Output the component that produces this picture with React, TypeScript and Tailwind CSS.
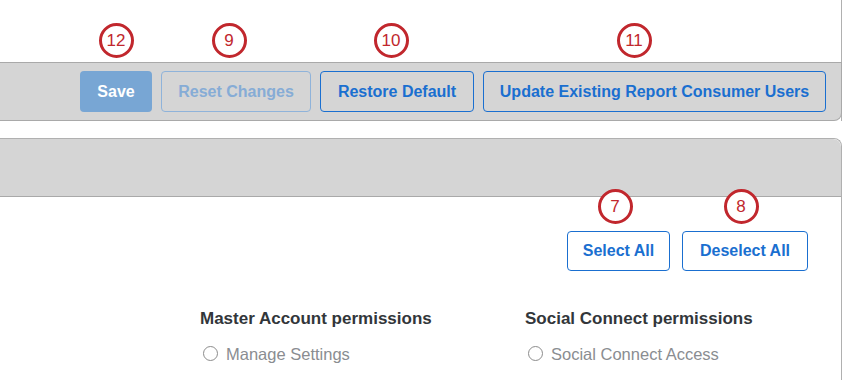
import React from "react";

// Numbered callouts drawn over the screenshot
const callouts = [
  { n: "12", x: 116, y: 40 },
  { n: "9", x: 229, y: 40 },
  { n: "10", x: 391, y: 40 },
  { n: "11", x: 634, y: 40 },
  { n: "7", x: 615, y: 206 },
  { n: "8", x: 741, y: 206 },
];

function Callout({ n, x, y }: { n: string; x: number; y: number }) {
  return (
    <div
      className="absolute w-[35px] h-[35px] rounded-full border-[3px] border-[#c1272d] bg-white flex items-center justify-center text-[#c1272d] text-[17px] leading-none"
      style={{ left: x - 17.5, top: y - 17.5 }}
    >
      {n}
    </div>
  );
}

function Radio({ label }: { label: string }) {
  return (
    <div className="flex items-center gap-[8px] mt-[10px] pl-[3px]">
      <span className="w-[15px] h-[15px] rounded-full border border-[#8c8c8c] bg-white" />
      <span className="text-[16.5px] text-[#8a8d91]">{label}</span>
    </div>
  );
}

export default function App() {
  return (
    <div className="relative w-[850px] h-[380px] bg-white overflow-hidden font-['Liberation_Sans',Arial,sans-serif]">
      {/* Top panel footer */}
      <div className="w-[842px] border-r border-[#b0b0b0]">
        <div className="h-[62px]" />
        <div className="h-[59px] bg-[#d5d5d5] border-y border-[#a9a9a9] rounded-br-[8px] flex items-center justify-end gap-[9px] pr-[15px] -mr-px border-r">
          <button className="w-[72px] h-[41px] rounded-[4px] bg-[#78a6d4] text-white text-[16px] font-bold">
            Save
          </button>
          <button className="w-[150px] h-[41px] rounded-[4px] border border-[#8fb3da] text-[#86acd6] text-[16px] font-bold">
            Reset Changes
          </button>
          <button className="w-[154px] h-[41px] rounded-[4px] border border-[#1a6fd0] text-[#1a6fd0] text-[16px] font-bold">
            Restore Default
          </button>
          <button className="w-[343px] h-[41px] rounded-[4px] border border-[#1a6fd0] text-[#1a6fd0] text-[16px] font-bold">
            Update Existing Report Consumer Users
          </button>
        </div>
      </div>

      {/* Permissions panel */}
      <div className="mt-[17px] w-[842px] h-[260px] border-r border-t border-[#b0b0b0] rounded-tr-[8px] bg-white">
        <div className="h-[58px] bg-[#d5d5d5] border-b border-[#a9a9a9] rounded-tr-[8px]" />
        <div className="flex justify-end gap-[12px] pr-[33px] pt-[34px]">
          <button className="w-[103px] h-[40px] rounded-[4px] border border-[#1a6fd0] text-[#1a6fd0] text-[16px] font-bold">
            Select All
          </button>
          <button className="w-[126px] h-[40px] rounded-[4px] border border-[#1a6fd0] text-[#1a6fd0] text-[16px] font-bold">
            Deselect All
          </button>
        </div>
        <div className="flex pl-[200px] pt-[35px]">
          <div className="w-[325px]">
            <div className="text-[17px] font-bold text-[#32363a]">Master Account permissions</div>
            <Radio label="Manage Settings" />
          </div>
          <div>
            <div className="text-[17px] font-bold text-[#32363a]">Social Connect permissions</div>
            <Radio label="Social Connect Access" />
          </div>
        </div>
      </div>

      {callouts.map((c) => (
        <Callout key={c.n} {...c} />
      ))}
    </div>
  );
}
